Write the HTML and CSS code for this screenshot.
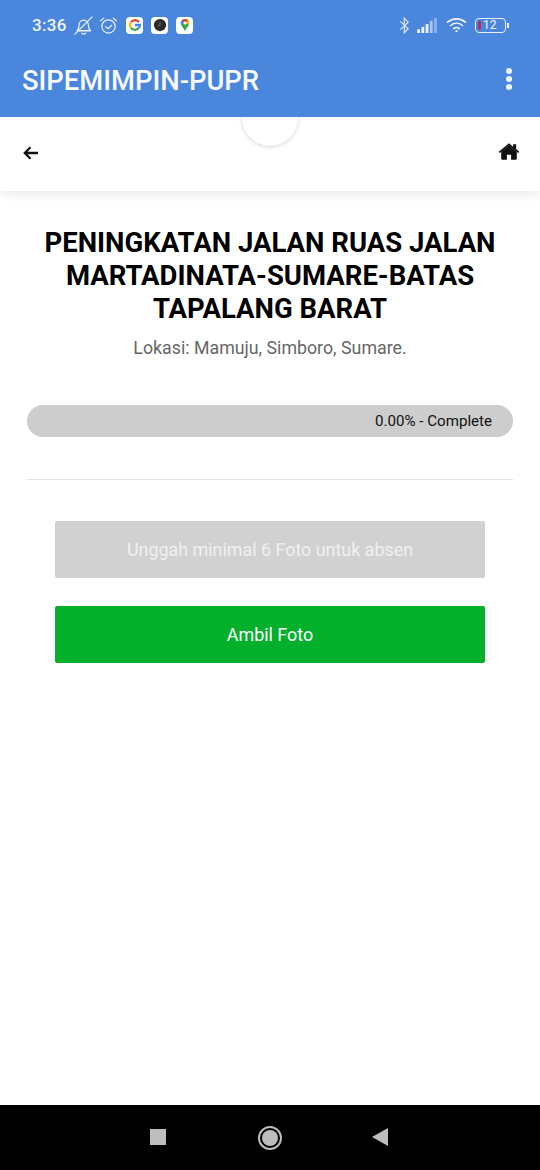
FILE: index.html
```html
<!DOCTYPE html>
<html lang="id">
<head>
<meta charset="utf-8">
<title>SIPEMIMPIN-PUPR</title>
<link rel="stylesheet" href="styles.css">
</head>
<body>
<div class="screen">
  <header class="top">
    <div class="status">
      <div class="status-left">
        <span class="time">3:36</span>
        <svg class="ic-bell" viewBox="0 0 20 20" fill="none" stroke="#eaf1fb" stroke-width="1.2" stroke-linejoin="round" stroke-linecap="round"><path d="M4 15c1.300-1.400 1.700-2.800 1.700-5 0-2.900 1.900-5.200 4.500-5.200s4.500 2.300 4.500 5.200c0 2.200.5 3.600 2 5z"/><path d="M8.300 17.300c1.100.9 2.600.9 3.700 0"/><path d="M1.800 18.200 18.200 1.800"/></svg>
        <svg class="ic-alarm" viewBox="0 0 20 20" fill="none" stroke="#eaf1fb" stroke-width="1.300" stroke-linecap="round" stroke-linejoin="round"><circle cx="10" cy="11" r="7"/><path d="M6.800 11.200 9.500 13.400 13.400 9.800"/><path d="M1.800 5 5 2.200M18.200 5 15 2.200"/></svg>
        <span class="app-tile">
          <svg viewBox="0 0 16 16" fill="none" stroke-width="2.600"><path d="M12.600 4.700A5.600 5.600 0 0 0 3.400 4.800" stroke="#ea4335"/><path d="M3.400 4.800a5.600 5.600 0 0 0 0 6.400" stroke="#fbbc05"/><path d="M3.400 11.200a5.600 5.600 0 0 0 9 .1" stroke="#34a853"/><path d="M12.400 11.300A5.600 5.600 0 0 0 13.600 8H8" stroke="#4285f4"/></svg>
        </span>
        <span class="app-tile">
          <svg viewBox="0 0 16 16"><circle cx="8" cy="8" r="7" fill="#2a2a2a"/><path d="M8 4v4.400h-2.400" fill="none" stroke="#777" stroke-width="1"/></svg>
        </span>
        <span class="app-tile">
          <svg viewBox="0 0 16 16"><path d="M8 1C5.200 1 3.200 3.100 3.200 5.700c0 3.400 3.400 5.600 4.800 9.300 1.400-3.700 4.800-5.900 4.800-9.300C12.800 3.100 10.800 1 8 1z" fill="#34a853"/><path d="M8 1C5.200 1 3.200 3.100 3.200 5.700c0 .8.200 1.500.5 2.100L8 5.700z" fill="#4285f4"/><path d="M8 1c2.800 0 4.800 2.100 4.800 4.700 0 .7-.2 1.400-.5 2L8 5.700z" fill="#fbbc05"/><path d="M8 1 4 3 8 5.700 11.800 2.700C10.900 1.600 9.500 1 8 1z" fill="#ea4335"/><circle cx="8" cy="5.700" r="1.800" fill="#fff"/></svg>
        </span>
      </div>
      <div class="status-right">
        <svg class="ic-bt" viewBox="0 0 12 20" fill="none" stroke="#dbe7f8" stroke-width="1.300"><path d="M1.500 5.500 10 13.500 5.800 18V2L10 6.500 1.500 14.500"/></svg>
        <svg class="ic-signal" viewBox="0 0 22 16"><rect x="0" y="12" width="3" height="4" fill="#eaf1fb"/><rect x="4.500" y="9.500" width="3" height="6.500" fill="#eaf1fb"/><rect x="9" y="6.500" width="3" height="9.500" fill="#eaf1fb"/><rect x="13.500" y="3" width="3" height="13" fill="#a9c6ee"/><rect x="18" y="0" width="3" height="16" fill="#8db2e8"/></svg>
        <svg class="ic-wifi" viewBox="0 0 22 18" fill="none" stroke="#f2f6fd" stroke-width="1.700" stroke-linecap="round"><path d="M1 5.500C6.500.8 14.500.8 20 5.500"/><path d="M4.200 9C8 5.800 13 5.800 16.800 9"/><path d="M7.500 12.300c1.900-1.500 4.100-1.500 6 0"/><circle cx="10.500" cy="15" r="1.200" fill="#f2f6fd" stroke="none"/></svg>
        <div class="battery">
          <div class="batt-body"><span class="batt-low"></span><span class="batt-num">12</span></div>
          <span class="batt-tip"></span>
        </div>
      </div>
    </div>
    <div class="appbar">
      <span class="app-title">SIPEMIMPIN-PUPR</span>
      <div class="kebab"><i></i><i></i><i></i></div>
    </div>
  </header>
  <div class="subbar">
    <span class="fab"></span>
    <svg class="ic-back" viewBox="0 0 16 14" fill="none" stroke="#111" stroke-width="2.300"><path d="M15 7H2M7.500 1.200 1.800 7l5.700 5.800"/></svg>
    <svg class="ic-home" viewBox="0 0 24 20"><path d="M12 3.300 3.500 10.300V18a1 1 0 0 0 1 1h5.200v-5.500h4.600V19h5.200a1 1 0 0 0 1-1v-7.700z" fill="#111"/><path d="M.8 10.200 12 1l4.500 3.700V2h3.300v5.400l3.400 2.800-1.200 1.500L12 3.500 2 11.700z" fill="#111"/></svg>
  </div>
  <main class="content">
    <h1 class="title">PENINGKATAN JALAN RUAS JALAN MARTADINATA-SUMARE-BATAS TAPALANG BARAT</h1>
    <p class="location">Lokasi: Mamuju, Simboro, Sumare.</p>
    <div class="progress">0.00% - Complete</div>
    <hr class="rule">
    <div class="actions">
      <button class="btn btn-off" type="button">Unggah minimal 6 Foto untuk absen</button>
      <button class="btn btn-go" type="button">Ambil Foto</button>
    </div>
  </main>
  <nav class="navbar">
    <span class="nav-square"></span>
    <span class="nav-home"><i></i></span>
    <span class="nav-back"></span>
  </nav>
</div>
</body>
</html>
```

FILE: styles.css
```css
* { box-sizing: border-box; }
html, body { margin: 0; padding: 0; }
body { width: 540px; height: 1170px; overflow: hidden; background: #fff; font-family: Roboto, "Liberation Sans", sans-serif; }
.screen { width: 540px; height: 1170px; display: flex; flex-direction: column; }

.top { height: 117px; background: #4a86dc; color: #fff; flex: none; position: relative; z-index: 1; }
.status { height: 50px; padding: 0 31px 0 32px; display: flex; justify-content: space-between; align-items: center; }
.status-left, .status-right { display: flex; align-items: center; }
.time { font-size: 17px; font-weight: 500; color: #eef4fc; letter-spacing: .3px; width: 36px; }
.ic-bell { width: 21px; height: 21px; margin-left: 5px; }
.ic-alarm { width: 19px; height: 19px; margin-left: 5px; }
.app-tile { width: 17px; height: 17px; background: #fff; border-radius: 4px; display: flex; align-items: center; justify-content: center; margin-left: 8px; }
.app-tile svg { width: 14px; height: 14px; }
.ic-bt { width: 11px; height: 19px; }
.ic-signal { width: 21px; height: 15px; margin-left: 7px; }
.ic-wifi { width: 22px; height: 17px; margin-left: 8px; }
.battery { display: flex; align-items: center; margin-left: 7px; }
.batt-body { width: 31px; height: 15px; border: 1.5px solid #eaf1fb; border-radius: 4px; display: flex; align-items: center; padding-left: 2px; }
.batt-low { width: 3px; height: 9px; background: #b5305c; border-radius: 1px; }
.batt-num { font-size: 12px; color: #f2f6fd; margin-left: 2px; line-height: 12px; }
.batt-tip { width: 2px; height: 5px; background: #eaf1fb; margin-left: 1px; }

.appbar { height: 67px; padding: 0 28px 6px 22px; display: flex; justify-content: space-between; align-items: center; }
.app-title { font-size: 27.4px; font-weight: 500; color: #f7faff; }
.kebab { display: flex; flex-direction: column; gap: 2.3px; margin-top: -3px; }
.kebab i { width: 6px; height: 6px; border-radius: 50%; background: #f2f6fd; display: block; }

.subbar { height: 74px; flex: none; background: #fff; box-shadow: 0 3px 10px rgba(0,0,0,.09); display: flex; justify-content: space-between; align-items: center; padding: 0 20px 2px 23px; position: relative; }
.fab { position: absolute; left: 242px; top: -27px; width: 56px; height: 56px; border-radius: 50%; background: #fff; box-shadow: 0 1px 4px rgba(0,0,0,.16); }
.ic-back { width: 16px; height: 14px; }
.ic-home { width: 22px; height: 19px; margin-bottom: 3px; }

.content { flex: 1; padding: 35px 27px 0; display: flex; flex-direction: column; }
.title { margin: 0; font-size: 27.5px; line-height: 33px; font-weight: 700; color: #000; text-align: center; }
.location { margin: 12px 0 0; font-size: 17.8px; line-height: 22px; color: #666; text-align: center; }
.progress { margin-top: 46px; height: 32px; border-radius: 16px; background: #cdcdcd; font-size: 15.1px; line-height: 32px; color: #111; text-align: right; padding-right: 21px; }
.rule { margin: 42px 0 0; border: 0; height: 1px; background: #e3e3e3; }
.actions { margin-top: 41px; padding: 0 28px; display: flex; flex-direction: column; gap: 28px; }
.btn { height: 57px; border: 0; border-radius: 2px; font-family: inherit; font-size: 17.9px; color: #fff; width: 100%; }
.btn-off { background: #d1d1d1; color: #f0f0f0; }
.btn-go { background: #03b02c; }

.navbar { height: 65px; flex: none; background: #000; position: relative; }
.nav-square { position: absolute; left: 150px; top: 24px; width: 16px; height: 16px; background: #bdbdbd; }
.nav-home { position: absolute; left: 258px; top: 21px; width: 24px; height: 24px; border: 2px solid #bdbdbd; border-radius: 50%; display: flex; align-items: center; justify-content: center; }
.nav-home i { width: 16px; height: 16px; border-radius: 50%; background: #bdbdbd; display: block; }
.nav-back { position: absolute; left: 372px; top: 23px; width: 0; height: 0; border-style: solid; border-width: 9px 16px 9px 0; border-color: transparent #bdbdbd transparent transparent; }
```
